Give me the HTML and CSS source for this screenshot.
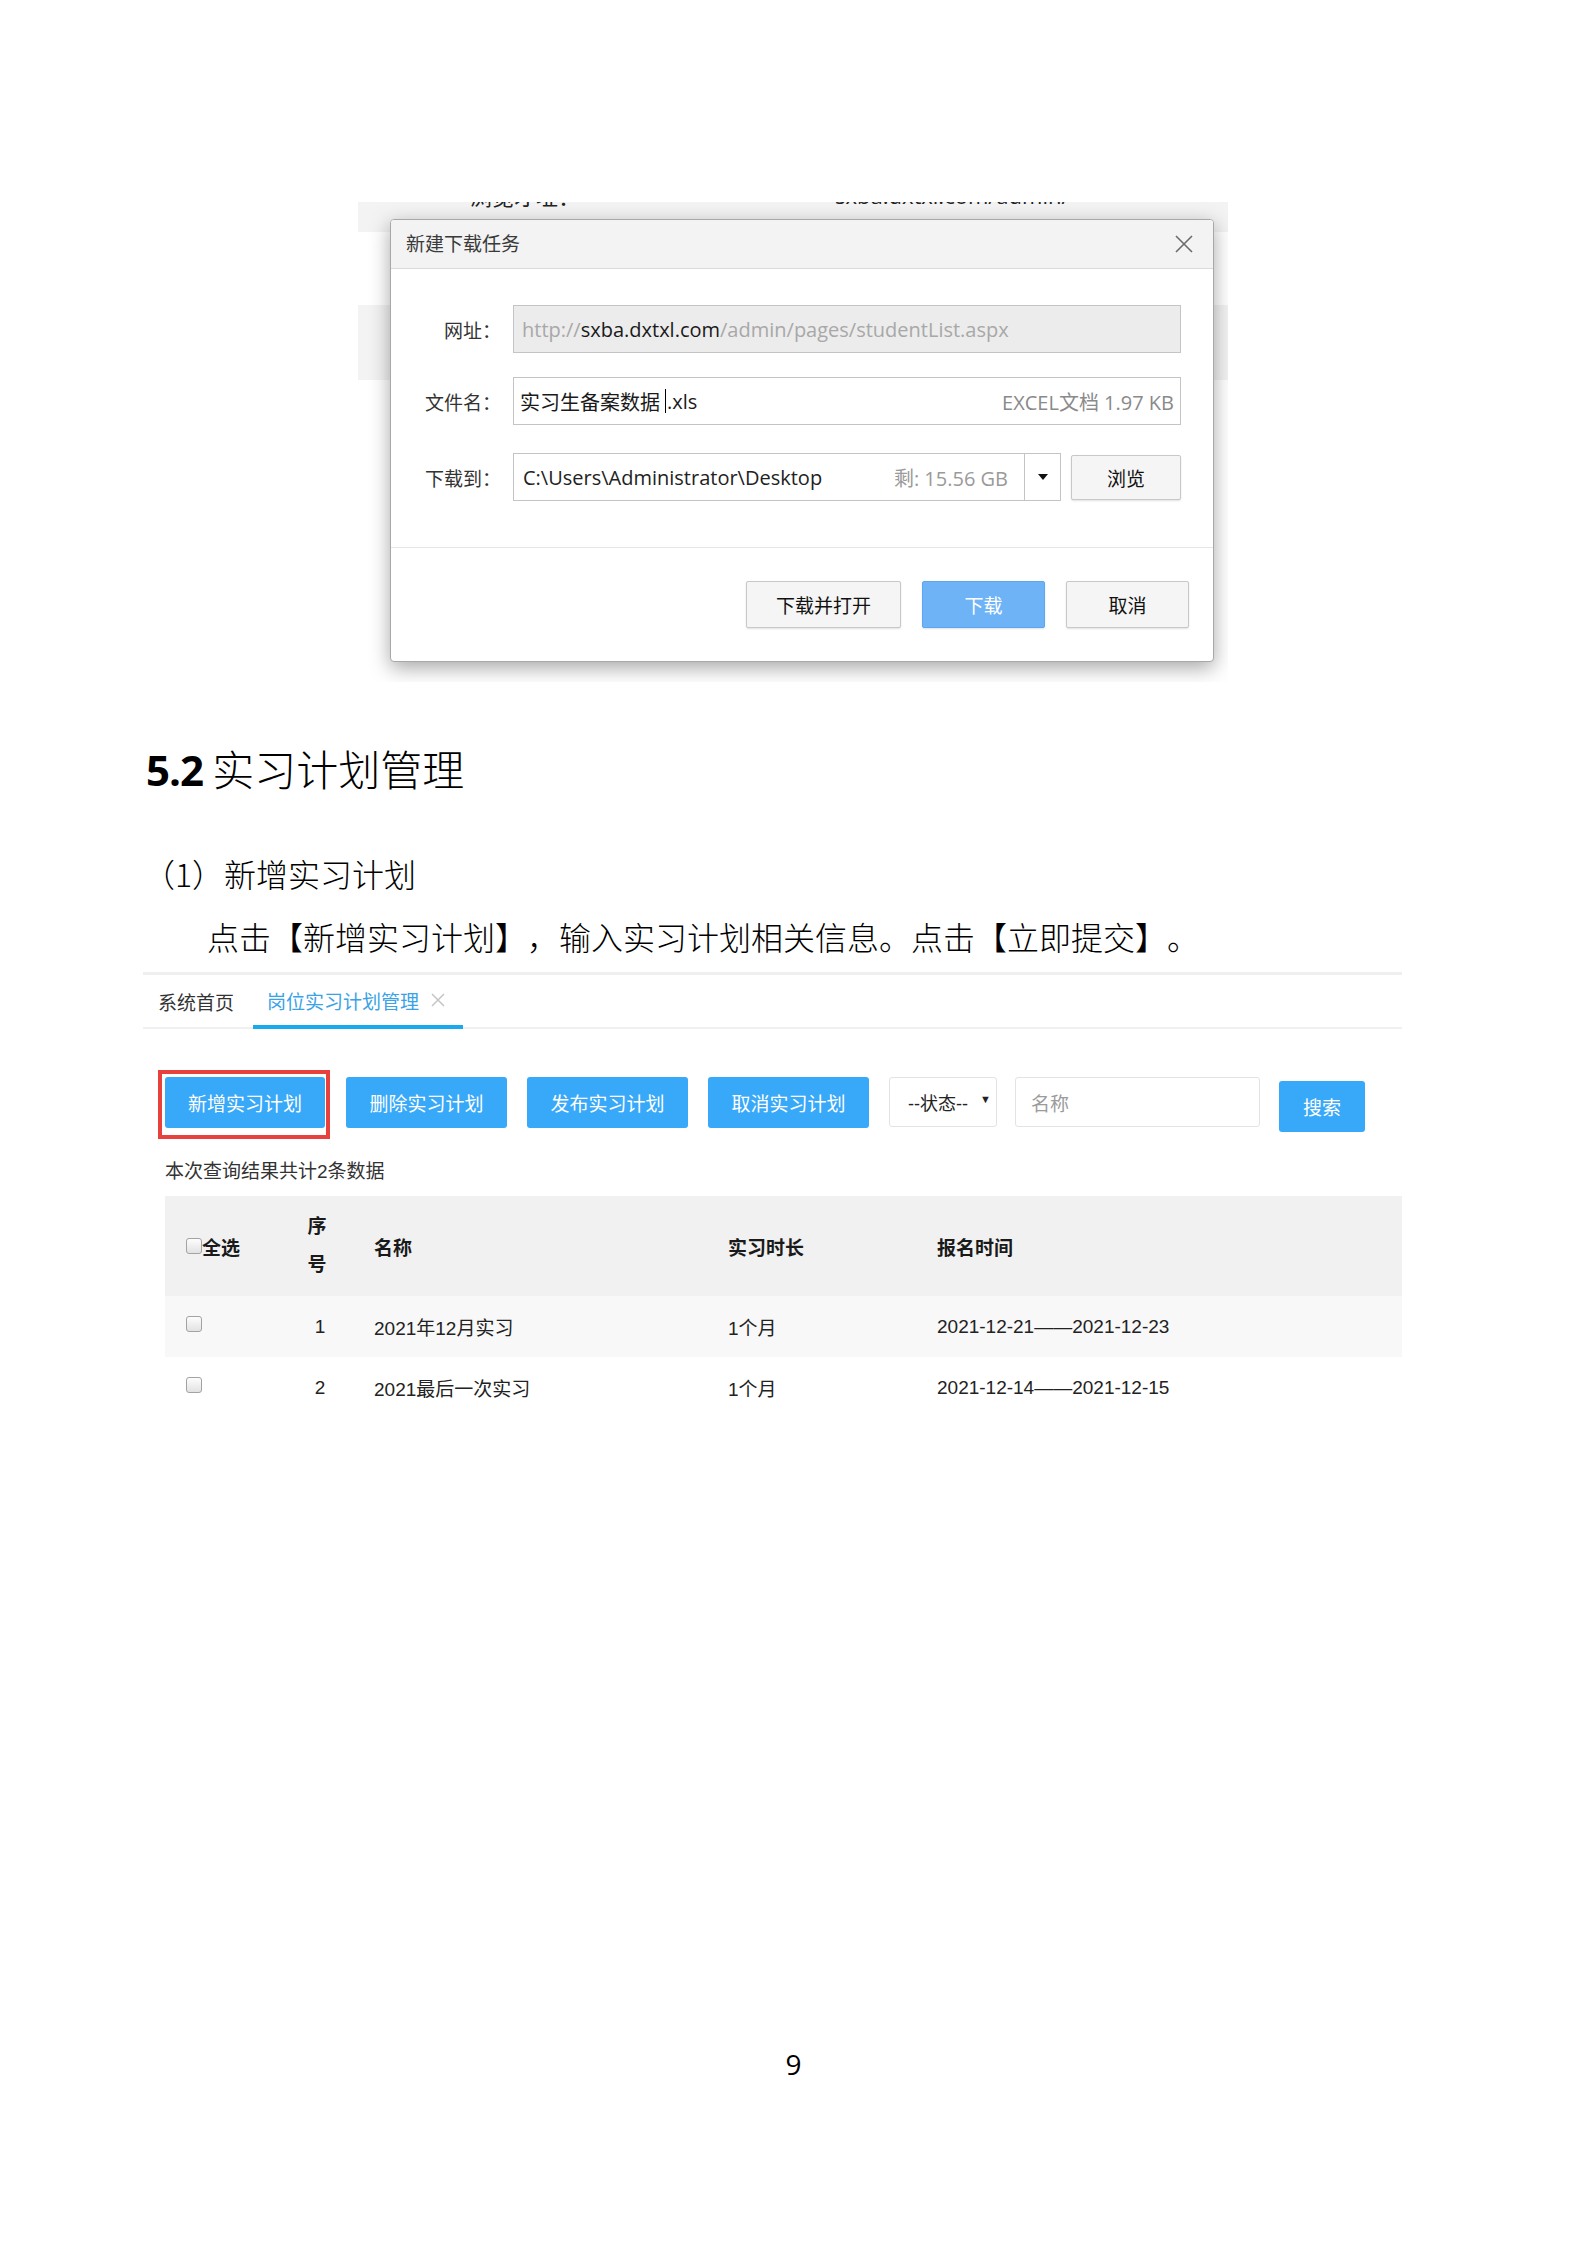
FILE: index.html
```html
<!DOCTYPE html>
<html lang="zh-CN">
<head>
<meta charset="utf-8">
<title>5.2 实习计划管理</title>
<link rel="stylesheet" href="styles.css">
</head>
<body>
<div class="page">
  <div class="shot1">
    <div class="cut"><div class="cut-inner"><span class="cut-a">浏览才址：</span><span class="cut-b">sxba.dxtxl.com/admin/</span></div></div>
    <div class="dialog">
      <div class="dlg-title">
        <span>新建下载任务</span>
        <svg class="dlg-close" width="20" height="20" viewBox="0 0 20 20"><path d="M2 2 L18 18 M18 2 L2 18" stroke="#6a6a6a" stroke-width="1.6" fill="none"/></svg>
      </div>
      <div class="dlg-body">
        <div class="dlg-row r1">
          <span class="dlg-label">网址：</span>
          <div class="field url"><span>http://</span><span class="dom">sxba.dxtxl.com</span><span>/admin/pages/studentList.aspx</span></div>
        </div>
        <div class="dlg-row r2">
          <span class="dlg-label">文件名：</span>
          <div class="field fname"><span class="fn">实习生备案数据</span><span class="caret"></span><span class="fn">.xls</span><span class="meta">EXCEL文档 1.97 KB</span></div>
        </div>
        <div class="dlg-row r3">
          <span class="dlg-label">下载到：</span>
          <div class="combo">
            <div class="combo-text"><span class="path">C:\Users\Administrator\Desktop</span><span class="free">剩: 15.56 GB</span></div>
            <div class="combo-drop"><span class="tri"></span></div>
          </div>
          <div class="dbtn browse">浏览</div>
        </div>
      </div>
      <div class="dlg-foot">
        <div class="dbtn wide">下载并打开</div>
        <div class="dbtn primary">下载</div>
        <div class="dbtn">取消</div>
      </div>
    </div>
  </div>

  <h2 class="h2"><span class="num">5.2</span> 实习计划管理</h2>
  <p class="h3">（1）新增实习计划</p>
  <p class="para">点击【新增实习计划】，输入实习计划相关信息。点击【立即提交】。</p>

  <div class="shot2">
    <div class="tabs">
      <div class="tab">系统首页</div>
      <div class="tab active">岗位实习计划管理<svg class="tab-x" width="16" height="16" viewBox="0 0 16 16"><path d="M2 2 L14 14 M14 2 L2 14" stroke="#c4c4c4" stroke-width="1.5" fill="none"/></svg></div>
    </div>
    <div class="toolbar">
      <div class="hl"><div class="btn">新增实习计划</div></div>
      <div class="btn">删除实习计划</div>
      <div class="btn">发布实习计划</div>
      <div class="btn">取消实习计划</div>
      <div class="sel">--状态--<span class="sel-arrow">▼</span></div>
      <div class="inp">名称</div>
      <div class="btn search">搜索</div>
    </div>
    <div class="count">本次查询结果共计2条数据</div>
    <table class="grid">
      <colgroup><col class="c1"><col class="c2"><col class="c3"><col class="c4"><col></colgroup>
      <thead>
        <tr>
          <th class="ck"><span class="cb"></span>全选</th>
          <th class="no"><span class="narrow">序号</span></th>
          <th>名称</th>
          <th>实习时长</th>
          <th>报名时间</th>
        </tr>
      </thead>
      <tbody>
        <tr class="odd">
          <td class="ck"><span class="cb"></span></td>
          <td class="no">1</td>
          <td>2021年12月实习</td>
          <td>1个月</td>
          <td>2021-12-21——2021-12-23</td>
        </tr>
        <tr>
          <td class="ck"><span class="cb"></span></td>
          <td class="no">2</td>
          <td>2021最后一次实习</td>
          <td>1个月</td>
          <td>2021-12-14——2021-12-15</td>
        </tr>
      </tbody>
    </table>
  </div>

  <div class="pageno">9</div>
</div>
</body>
</html>
```

FILE: styles.css
```css
body {
  margin: 0;
  background: #fff;
}

.page {
  width: 1587px;
  padding-top: 202px;
  font-family: "Noto Sans CJK SC", sans-serif;
  color: #000;
  text-spacing-trim: space-all;
}

/* ---------- screenshot 1 : download dialog ---------- */
.shot1 {
  margin-left: 358px;
  width: 870px;
  height: 480px;
  overflow: hidden;
  background: linear-gradient(#f3f3f3 0, #f3f3f3 30px, #fff 30px, #fff 103px, #f3f3f3 103px, #f3f3f3 178px, #fff 178px);
}

.cut {
  height: 7px;
  overflow: hidden;
}

.cut-inner {
  display: flex;
  margin-top: -20px;
  font-size: 22px;
  line-height: 26px;
  color: #222;
}

.cut-a {
  margin-left: 112px;
  width: 365px;
}

.cut-b {
  font-family: "Open Sans", "Noto Sans CJK SC", sans-serif;
}

.dialog {
  margin: 10px 0 0 32px;
  width: 824px;
  box-sizing: border-box;
  border: 1px solid #a8a8a8;
  border-radius: 4px;
  background: #fff;
  box-shadow: 0 6px 20px rgba(0, 0, 0, 0.35);
  font-family: "Open Sans", "Noto Sans CJK SC", sans-serif;
}

.dlg-title {
  height: 48px;
  box-sizing: border-box;
  padding: 0 19px 4px 15px;
  background: #f3f3f3;
  border-bottom: 1px solid #dadada;
  border-radius: 3px 3px 0 0;
  display: flex;
  align-items: center;
  justify-content: space-between;
  font-family: "Noto Sans CJK SC", sans-serif;
  font-size: 19px;
  color: #3a3a3a;
}

.dlg-title {
  height: 49px;
}

.dlg-close {
  display: block;
  margin-top: 4px;
}

.dlg-body {
  padding: 36px 32px 46px 0;
}

.dlg-row {
  display: flex;
  align-items: center;
}

.r1 { margin-bottom: 24px; }
.r2 { margin-bottom: 28px; }

.dlg-label {
  width: 110px;
  margin-right: 12px;
  text-align: right;
  font-family: "Noto Sans CJK SC", sans-serif;
  font-size: 19px;
  color: #333;
}

.field {
  flex: 1;
  height: 48px;
  box-sizing: border-box;
  border: 1px solid #c4c4c4;
  display: flex;
  align-items: center;
  padding: 0 6px 0 8px;
  font-size: 20px;
  white-space: nowrap;
}

.url {
  background: #ececec;
  color: #a8a8a8;
}

.url .dom {
  color: #1a1a1a;
}

.fname {
  color: #1a1a1a;
  padding-left: 6px;
}

.caret {
  display: inline-block;
  width: 1px;
  height: 24px;
  background: #000;
  margin: 0 1px 0 5px;
}

.meta {
  margin-left: auto;
  color: #8a8a8a;
}

.combo {
  flex: 1;
  height: 48px;
  box-sizing: border-box;
  border: 1px solid #c4c4c4;
  display: flex;
}

.combo-text {
  flex: 1;
  display: flex;
  align-items: center;
  padding: 0 16px 0 9px;
  font-size: 20px;
  color: #222;
  white-space: nowrap;
}

.free {
  margin-left: auto;
  color: #9a9a9a;
}

.combo-drop {
  width: 35px;
  border-left: 1px solid #c4c4c4;
  display: flex;
  align-items: center;
  justify-content: center;
}

.tri {
  width: 0;
  height: 0;
  border-left: 5px solid transparent;
  border-right: 5px solid transparent;
  border-top: 6px solid #111;
}

.dbtn {
  width: 123px;
  height: 47px;
  box-sizing: border-box;
  border: 1px solid #c8c8c8;
  border-radius: 2px;
  background: #f5f5f5;
  box-shadow: 0 1px 2px rgba(0, 0, 0, 0.12);
  display: flex;
  align-items: center;
  justify-content: center;
  font-family: "Noto Sans CJK SC", sans-serif;
  font-size: 19px;
  color: #111;
}

.browse {
  width: 110px;
  height: 45px;
  margin-left: 10px;
}

.wide {
  width: 155px;
}

.primary {
  background: #6db3f6;
  border-color: #5da7ee;
  color: #fff;
}

.dlg-foot {
  border-top: 1px solid #e6e6e6;
  padding: 33px 24px 33px 0;
  display: flex;
  justify-content: flex-end;
  gap: 21px;
}

/* ---------- document text ---------- */
.h2 {
  margin: 61px 0 0 146px;
  font-size: 42px;
  line-height: 50px;
  font-weight: 300;
  color: #000;
}

.h2 .num {
  font-family: "Open Sans", sans-serif;
  font-weight: bold;
  letter-spacing: -1px;
}

.h3 {
  margin: 58px 0 0 143px;
  font-size: 32px;
  line-height: 40px;
  font-weight: 300;
}

.para {
  margin: 23px 0 0 143px;
  font-size: 32px;
  line-height: 40px;
  font-weight: 300;
  text-indent: 64px;
}

/* ---------- screenshot 2 : web admin ---------- */
.shot2 {
  margin: 16px 0 0 143px;
  width: 1259px;
  border-top: 3px solid #efefef;
  font-family: "Liberation Sans", "Noto Sans CJK SC", sans-serif;
  font-size: 19px;
  color: #222;
}

.tabs {
  display: flex;
  height: 54px;
  box-sizing: border-box;
  border-bottom: 2px solid #f0f0f0;
}

.tab {
  display: flex;
  align-items: center;
  padding: 0 19px 0 15px;
  font-family: "Noto Sans CJK SC", sans-serif;
  color: #333;
}

.tab.active {
  padding: 0 17px 0 14px;
  border-bottom: 4px solid #19a9ef;
  margin-bottom: -2px;
  color: #3aa2e6;
}

.tab-x {
  display: block;
  margin-left: 11px;
}

.toolbar {
  display: flex;
  align-items: flex-start;
  margin-top: 48px;
  padding-left: 22px;
}

.hl {
  position: relative;
  margin-right: 21px;
}

.hl::after {
  content: "";
  position: absolute;
  top: -7px;
  left: -7px;
  right: -5px;
  bottom: -11px;
  border: 4px solid #e8403d;
}

.btn {
  width: 161px;
  height: 51px;
  border-radius: 3px;
  background: #38a8f9;
  color: #fff;
  display: flex;
  align-items: center;
  justify-content: center;
  font-family: "Noto Sans CJK SC", sans-serif;
  font-size: 19px;
  margin-right: 20px;
}

.hl .btn {
  width: 160px;
  margin-right: 0;
}

.sel {
  width: 108px;
  height: 50px;
  box-sizing: border-box;
  border: 1px solid #e3e3e3;
  border-radius: 3px;
  display: flex;
  align-items: center;
  padding-left: 18px;
  font-size: 18px;
  color: #222;
  margin-right: 18px;
}

.sel-arrow {
  font-size: 11px;
  margin-left: 12px;
  margin-top: -6px;
}

.inp {
  width: 245px;
  height: 50px;
  box-sizing: border-box;
  border: 1px solid #e3e3e3;
  border-radius: 3px;
  display: flex;
  align-items: center;
  padding-left: 15px;
  font-family: "Noto Sans CJK SC", sans-serif;
  font-size: 19px;
  color: #9b9b9b;
  margin-right: 19px;
}

.btn.search {
  width: 86px;
  margin-top: 4px;
  margin-right: 0;
}

.count {
  margin-top: 28px;
  padding-left: 22px;
  line-height: 24px;
  color: #333;
}

.grid {
  margin: 12px 0 0 22px;
  width: 1237px;
  border-collapse: collapse;
  table-layout: fixed;
}

.c1 { width: 125px; }
.c2 { width: 54px; }
.c3 { width: 354px; }
.c4 { width: 209px; }

.grid th,
.grid td {
  padding: 0 0 0 30px;
  text-align: left;
  white-space: nowrap;
}

.grid th {
  font-weight: bold;
  color: #1a1a1a;
}

.grid thead tr {
  height: 100px;
  background: #f1f1f1;
}

.grid tbody tr {
  height: 61px;
}

.grid tr.odd {
  background: #f8f8f8;
}

.grid .ck {
  padding-left: 21px;
}

.grid .no {
  padding-left: 0;
  text-align: center;
}

.grid td.no {
  padding-left: 6px;
}

.grid th.no {
  white-space: normal;
}

.narrow {
  display: inline-block;
  width: 1em;
  line-height: 38px;
}

.cb {
  display: inline-block;
  width: 14px;
  height: 14px;
  border: 1px solid #a3a3a3;
  border-radius: 3px;
  background: linear-gradient(#fdfdfd, #e2e2e2);
  vertical-align: 1px;
}

.pageno {
  margin-top: 626px;
  text-align: center;
  font-family: "Open Sans", sans-serif;
  font-size: 28px;
  line-height: 40px;
}
```
